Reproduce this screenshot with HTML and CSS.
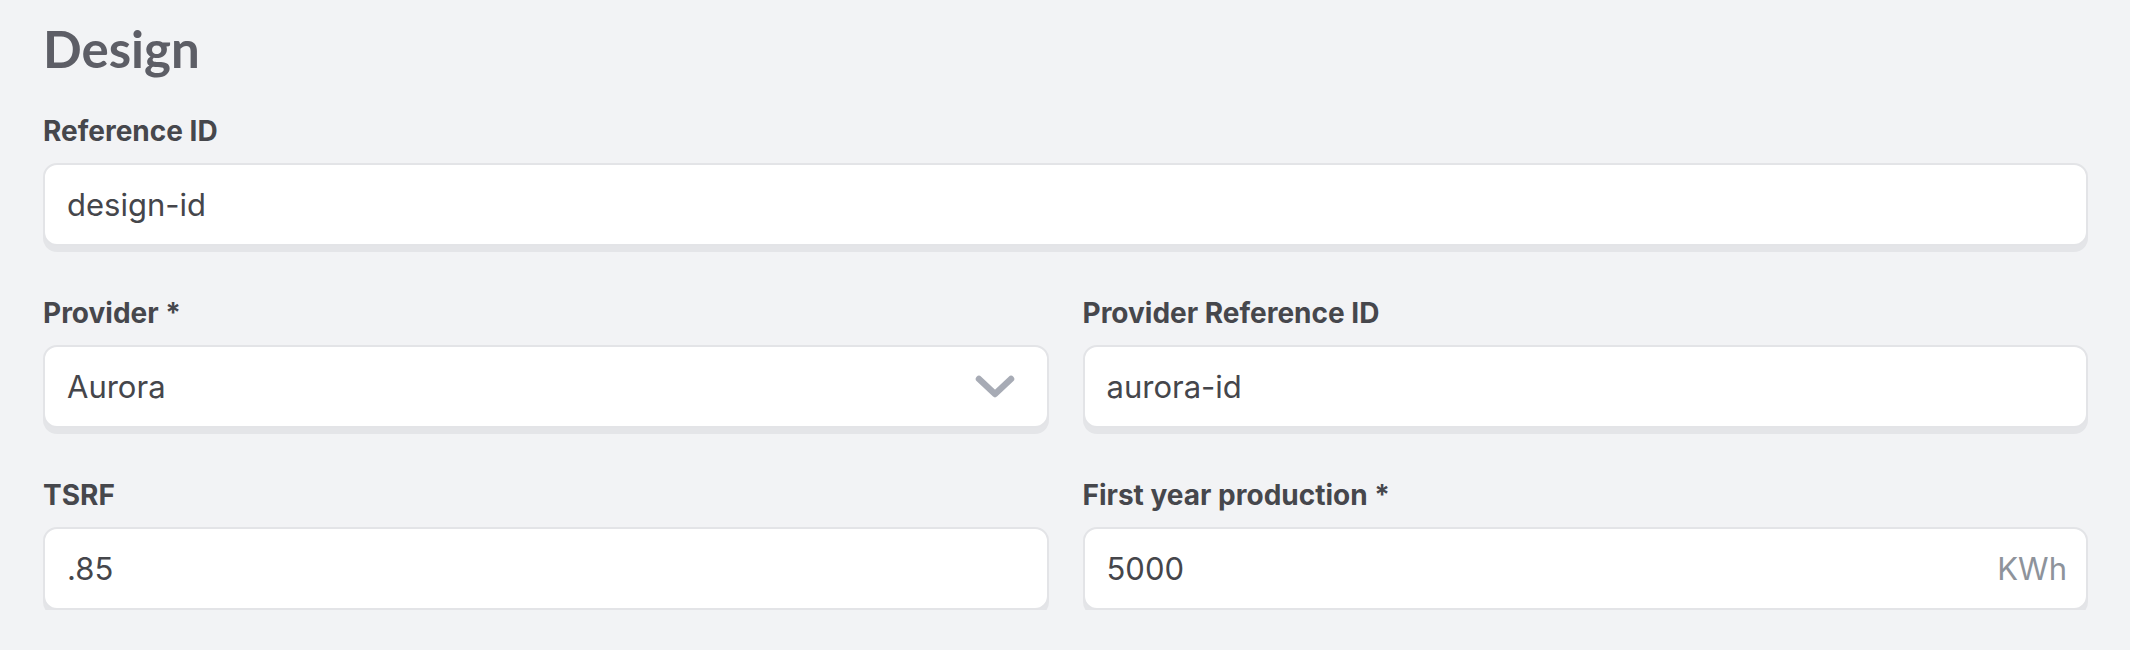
FILE: index.html
```html
<!DOCTYPE html>
<html lang="en">
<head>
    <meta charset="UTF-8">
    <title>Design</title>
    <link rel="stylesheet" href="styles.css">
</head>
<body>

<div class="section">
    <h2>Design</h2>
    <form class="design-form">
        <div class="field full">
            <label for="refId">Reference ID</label>
            <div class="box">
                <input type="text" id="refId" value="design-id">
            </div>
        </div>

        <div class="field">
            <label for="provider">Provider *</label>
            <div class="box">
                <select id="provider">
                    <option>Aurora</option>
                </select>
                <svg class="chevron" width="40" height="24" viewBox="0 0 40 24">
                    <path d="M4 4 L20 19 L36 4" fill="none" stroke="#a7abb5" stroke-width="6.5" stroke-linecap="round" stroke-linejoin="round"/>
                </svg>
            </div>
        </div>
        <div class="field">
            <label for="providerRef">Provider Reference ID</label>
            <div class="box">
                <input type="text" id="providerRef" value="aurora-id">
            </div>
        </div>

        <div class="field">
            <label for="tsrf">TSRF</label>
            <div class="box">
                <input type="text" id="tsrf" value=".85">
            </div>
        </div>
        <div class="field">
            <label for="production">First year production *</label>
            <div class="box unit-box">
                <input type="text" id="production" value="5000">
                <span class="unit">KWh</span>
            </div>
        </div>
    </form>
</div>

</body>
</html>
```

FILE: styles.css
```css
body {
    margin: 0;
    background: #f2f3f5;
    font-family: Inter, "Noto Sans", sans-serif;
}
.section {
    padding: 19px 42px 0 43px;
}
h2 {
    margin: 0 0 35px 0;
    font-family: Lato, sans-serif;
    font-size: 51px;
    line-height: 60px;
    font-weight: 700;
    color: #5d5e66;
}
.design-form {
    display: grid;
    grid-template-columns: 1fr 1fr;
    column-gap: 34px;
    row-gap: 50px;
}
.field {
    display: flex;
    flex-direction: column;
    gap: 15px;
}
.field.full {
    grid-column: 1 / 3;
}
label {
    font-size: 28px;
    line-height: 34px;
    font-weight: 700;
    color: #46474c;
}
.box {
    display: flex;
    align-items: center;
    height: 83px;
    box-sizing: border-box;
    padding: 0 23px 0 22px;
    background: white;
    border: 2px solid #e3e4e7;
    border-radius: 14px;
    box-shadow: 0 6px 0 #e4e5e8;
}
.unit-box {
    padding-right: 19px;
}
.box input,
.box select {
    flex: 1;
    min-width: 0;
    border: none;
    outline: none;
    background: transparent;
    padding: 0;
    font-family: Inter, "Noto Sans", sans-serif;
    font-size: 31px;
    color: #45464b;
    appearance: none;
}
.chevron {
    margin-right: 9px;
    pointer-events: none;
}
.unit {
    font-size: 31px;
    color: #8e939b;
}
```
